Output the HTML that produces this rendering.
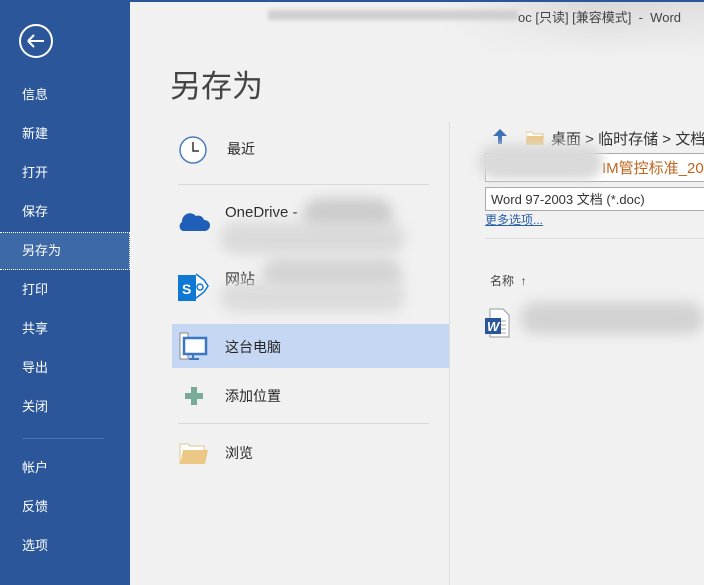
<!DOCTYPE html>
<html><head><meta charset="utf-8"><style>
*{margin:0;padding:0;box-sizing:border-box}
body{width:704px;height:585px;overflow:hidden;background:#f1f1f1;font-family:"Liberation Sans","Noto Sans CJK SC",sans-serif;position:relative}
.side{position:absolute;left:0;top:0;width:130px;height:585px;background:#2b579a;color:#fff}
.side .it{position:absolute;left:22px;font-size:13px}
.sel{position:absolute;left:0;top:232px;width:130px;height:38px;background:#3d69a6;border-top:1px dotted #fff;border-bottom:1px dotted #fff;border-right:1px dotted #fff}
.abs{position:absolute}
.t{position:absolute;font-size:14px;color:#262626}
.blur{position:absolute;background:#d2d2d2;border-radius:20px;filter:blur(6px)}
</style></head><body>
<div class="abs" style="left:130px;top:0;width:574px;height:2px;background:#2b579a"></div>
<div class="abs" style="left:440px;top:2px;width:264px;height:55px;background:linear-gradient(180deg,rgba(241,241,241,0),#f1f1f1),linear-gradient(90deg,#f1f1f1,#d8d8d8 60%,#e0e0e0)"></div>
<div class="abs" style="left:268px;top:10px;width:250px;height:10px;background:#cfcfcf;filter:blur(2px)"></div>
<div class="abs" style="left:518px;top:7px;font-size:13px;color:#444">oc [只读] [兼容模式] &nbsp;- &nbsp;Word</div>

<div class="side">
<svg class="abs" style="left:18px;top:23px" width="36" height="36" viewBox="0 0 36 36"><circle cx="18" cy="18" r="16" fill="none" stroke="#fff" stroke-width="2"/><path d="M10 18H26M10 18l6-6M10 18l6 6" stroke="#fff" stroke-width="2" fill="none"/></svg>
<div class="it" style="top:84px">信息</div>
<div class="it" style="top:123px">新建</div>
<div class="it" style="top:162px">打开</div>
<div class="it" style="top:201px">保存</div>
<div class="sel"></div>
<div class="it" style="top:240px">另存为</div>
<div class="it" style="top:279px">打印</div>
<div class="it" style="top:318px">共享</div>
<div class="it" style="top:357px">导出</div>
<div class="it" style="top:396px">关闭</div>
<div class="abs" style="left:22px;top:438px;width:82px;height:1px;background:#4a72b0"></div>
<div class="it" style="top:457px">帐户</div>
<div class="it" style="top:496px">反馈</div>
<div class="it" style="top:535px">选项</div>
</div>

<div class="abs" style="left:170px;top:61px;font-size:31px;color:#444">另存为</div>

<svg class="abs" style="left:179px;top:136px" width="30" height="30"><circle cx="14" cy="14" r="13" fill="#fff" stroke="#4a7dbf" stroke-width="1.5"/><path d="M14 6v9h6" stroke="#333" stroke-width="1.5" fill="none"/></svg>
<div class="t" style="left:227px;top:139px">最近</div>
<div class="abs" style="left:178px;top:184px;width:251px;height:1px;background:#dadada"></div>

<svg class="abs" style="left:178px;top:209px" width="32" height="24" viewBox="0 0 32 24"><path d="M5 22a5 5 0 0 1-1-9a8 8 0 0 1 14-6a6 6 0 0 1 8 4a5.5 5.5 0 0 1 1 11z" fill="#1f5fb8"/></svg>
<div class="t" style="left:225px;top:204px;font-size:15px">OneDrive -</div>
<div class="blur" style="left:303px;top:198px;width:90px;height:34px;background:#cccccc"></div>
<div class="blur" style="left:220px;top:222px;width:185px;height:32px;background:#dadada"></div>

<svg class="abs" style="left:178px;top:272px" width="32" height="30"><rect x="0" y="3" width="18" height="26" fill="#0f78d4"/><path d="M18 2l8 6l4 6l-4 6l-8 6" fill="#fff" stroke="#0f78d4" stroke-width="1.5"/><circle cx="22" cy="15" r="3" fill="none" stroke="#0f78d4" stroke-width="1.5"/><text x="4" y="22" font-size="14" font-weight="bold" fill="#fff" font-family="Liberation Sans">S</text></svg>
<div class="t" style="left:225px;top:268px;font-size:15px">网站</div>
<div class="blur" style="left:262px;top:258px;width:140px;height:34px;background:#d4d4d4"></div>
<div class="blur" style="left:220px;top:282px;width:185px;height:30px;background:#dcdcdc"></div>

<div class="abs" style="left:172px;top:324px;width:277px;height:44px;background:#c5d7f2"></div>
<svg class="abs" style="left:179px;top:332px" width="32" height="28"><rect x="1" y="1" width="8" height="26" fill="#fff" stroke="#888"/><rect x="5" y="6" width="22" height="16" fill="#fff" stroke="#3a78bf" stroke-width="2.5"/><path d="M14 22v4M10 27h10" stroke="#3a78bf" stroke-width="2"/></svg>
<div class="t" style="left:225px;top:337px">这台电脑</div>

<svg class="abs" style="left:185px;top:387px" width="18" height="18"><path d="M6 0h6v6h6v6h-6v6h-6v-6h-6v-6h6z" fill="#7aab98"/></svg>
<div class="t" style="left:225px;top:386px">添加位置</div>
<div class="abs" style="left:178px;top:423px;width:251px;height:1px;background:#dadada"></div>

<svg class="abs" style="left:179px;top:442px" width="30" height="22"><path d="M1 2h8l2 2h14v18H1z" fill="#fff" stroke="#e6c68a"/><path d="M4 8h25l-3 14H1z" fill="#ecc886"/></svg>
<div class="t" style="left:225px;top:443px">浏览</div>

<div class="abs" style="left:449px;top:122px;width:1px;height:463px;background:#dcdcdc"></div>

<svg class="abs" style="left:492px;top:128px" width="16" height="17"><path d="M8 1l7 7h-5v8H6V8H1z" fill="#3b70b8"/></svg>
<svg class="abs" style="left:526px;top:131px" width="18" height="14"><path d="M0 1h6l2 2h9v11H0z" fill="#fff" stroke="#e6c68a"/><path d="M1 5h17l-2 9H0z" fill="#ecc886"/></svg>
<div class="abs" style="left:551px;top:128px;font-size:15px;color:#333;white-space:nowrap">桌面 &gt; 临时存储 &gt; 文档</div>
<div class="abs" style="left:485px;top:153px;width:219px;height:29px;background:#fff;border:1px solid #ababab;border-right:none"></div>
<div class="abs" style="left:602px;top:157px;font-size:15px;color:#c0641e;white-space:nowrap">IM管控标准_2016</div>
<div class="blur" style="left:478px;top:144px;width:125px;height:36px;background:#dadada;filter:blur(5px)"></div>
<div class="abs" style="left:485px;top:187px;width:219px;height:24px;background:#fff;border:1px solid #ababab;border-right:none"></div>
<div class="abs" style="left:491px;top:189px;font-size:13px;color:#333">Word 97-2003 文档 (*.doc)</div>
<div class="abs" style="left:485px;top:211px;font-size:12px;color:#2b5fa8;text-decoration:underline">更多选项...</div>
<div class="abs" style="left:485px;top:238px;width:219px;height:1px;background:#dcdcdc"></div>
<div class="abs" style="left:490px;top:272px;font-size:12px;color:#444">名称 &nbsp;↑</div>
<svg class="abs" style="left:485px;top:308px" width="28" height="30"><path d="M5 1h13l6 6v22H5z" fill="#fff" stroke="#999"/><path d="M9 13h12M9 17h12M9 21h12M9 25h12" stroke="#aaa"/><rect x="0" y="10" width="16" height="16" fill="#2b579a"/><text x="2" y="23" font-size="13" font-weight="bold" font-style="italic" fill="#fff" font-family="Liberation Sans">W</text></svg>
<div class="blur" style="left:520px;top:302px;width:184px;height:32px;background:#d2d2d2"></div>
</body></html>
